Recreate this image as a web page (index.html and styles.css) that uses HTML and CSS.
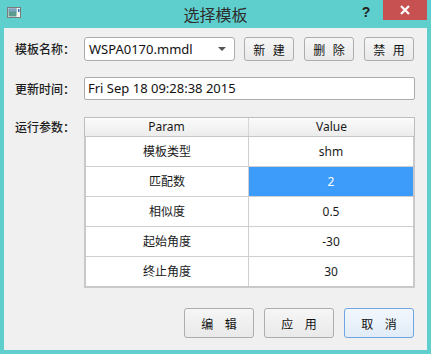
FILE: index.html
```html
<!DOCTYPE html>
<html lang="zh-CN">
<head>
    <meta charset="UTF-8">
    <title>选择模板</title>
    <link rel="stylesheet" href="styles.css">
</head>
<body>
    <div class="window">
        <div class="titlebar">
            <svg class="app-icon" width="14" height="11" viewBox="0 0 14 11">
                <rect x="0.5" y="0.5" width="13" height="10" fill="#f4f4f4" stroke="#7a7a7a"/>
                <rect x="1.5" y="1.5" width="8" height="8" fill="#5b9a8c"/>
                <rect x="1.5" y="1.5" width="8" height="3" fill="#7fa3c4"/>
                <rect x="11" y="2" width="1.5" height="3" fill="#2f6fb0"/>
            </svg>
            <div class="titlebar-title">选择模板</div>
            <div class="titlebar-help">?</div>
            <button class="titlebar-close" title="关闭">
                <svg width="10" height="10" viewBox="0 0 10 10">
                    <path d="M1 1 L9 9 M9 1 L1 9" stroke="#ffffff" stroke-width="2.2"/>
                </svg>
            </button>
        </div>

        <div class="content">
            <div class="form-row row-template">
                <div class="form-label">模板名称：</div>
                <div class="combo">
                    <span class="combo-text">WSPA0170.mmdl</span>
                    <span class="combo-arrow"></span>
                </div>
                <button class="btn small">新 建</button>
                <button class="btn small">删 除</button>
                <button class="btn small">禁 用</button>
            </div>

            <div class="form-row row-time">
                <div class="form-label">更新时间：</div>
                <div class="text-input">Fri Sep 18 09:28:38 2015</div>
            </div>

            <div class="form-row row-params">
                <div class="form-label">运行参数：</div>
                <div class="param-table">
                    <div class="param-head">
                        <div class="cell">Param</div>
                        <div class="cell">Value</div>
                    </div>
                    <div class="param-body">
                        <div class="param-row">
                            <div class="cell">模板类型</div>
                            <div class="cell">shm</div>
                        </div>
                        <div class="param-row">
                            <div class="cell">匹配数</div>
                            <div class="cell selected">2</div>
                        </div>
                        <div class="param-row">
                            <div class="cell">相似度</div>
                            <div class="cell">0.5</div>
                        </div>
                        <div class="param-row">
                            <div class="cell">起始角度</div>
                            <div class="cell">-30</div>
                        </div>
                        <div class="param-row">
                            <div class="cell">终止角度</div>
                            <div class="cell">30</div>
                        </div>
                    </div>
                </div>
            </div>

            <div class="dialog-buttons">
                <button class="btn large">编 辑</button>
                <button class="btn large">应 用</button>
                <button class="btn large default">取 消</button>
            </div>
        </div>
    </div>
</body>
</html>
```

FILE: styles.css
```css
body {
    margin: 0;
    padding: 0;
    font-family: 'Noto Sans', 'Noto Sans CJK SC', sans-serif;
    background-color: #5fcfcd;
    color: #1a1a1a;
    overflow: hidden;
}

.window {
    width: 431px;
    height: 354px;
    box-sizing: border-box;
    border: 4px solid #5fcfcd;
    border-top: none;
    display: flex;
    flex-direction: column;
}

.titlebar {
    height: 28px;
    display: flex;
    align-items: flex-start;
    position: relative;
}

.app-icon {
    margin: 7px 0 0 3px;
}

.titlebar-title {
    position: absolute;
    left: 0;
    right: 0;
    top: 3px;
    text-align: center;
    font-family: 'Noto Sans CJK SC', sans-serif;
    font-size: 16px;
    line-height: 22px;
    color: #2e2e2e;
    pointer-events: none;
}

.titlebar-help {
    margin-left: auto;
    margin-top: 3px;
    width: 20px;
    text-align: center;
    font-family: 'Liberation Sans', sans-serif;
    font-weight: bold;
    font-size: 14px;
    line-height: 18px;
    color: #222222;
}

.titlebar-close {
    margin-left: 7px;
    width: 44px;
    height: 20px;
    border: none;
    padding: 0;
    background: #c75050;
    display: flex;
    align-items: center;
    justify-content: center;
}

.content {
    flex: 1;
    background: #f0f0f0;
    padding: 9px 12px 0 11px;
    font-size: 12px;
}

.form-row {
    display: flex;
    align-items: flex-start;
}

.form-label {
    width: 69px;
    flex: none;
    font-family: 'Noto Sans CJK SC', sans-serif;
    font-size: 12px;
    font-weight: 500;
    color: #1e1e1e;
}

.row-template {
    height: 24px;
}

.row-template .form-label {
    line-height: 24px;
}

.combo {
    width: 151px;
    height: 24px;
    box-sizing: border-box;
    border: 1px solid #acacac;
    border-radius: 3px;
    background: #ffffff;
    display: flex;
    align-items: center;
    padding: 0 8px 0 4px;
    margin-right: 9px;
}

.combo-text {
    flex: 1;
    font-size: 13px;
    color: #111111;
}

.combo-arrow {
    width: 0;
    height: 0;
    border-left: 4px solid transparent;
    border-right: 4px solid transparent;
    border-top: 4px solid #555555;
}

.btn {
    font-family: 'Noto Sans CJK SC', sans-serif;
    font-size: 12px;
    color: #111111;
    border: 1px solid #adadad;
    border-radius: 3px;
    background: linear-gradient(#f6f6f6, #e9e9e9);
    padding: 0;
    box-sizing: border-box;
}

.btn.small {
    width: 50px;
    height: 24px;
    margin-right: 10px;
    word-spacing: 5px;
}

.btn.small:last-child {
    margin-right: 0;
}

.btn.large {
    width: 70px;
    height: 30px;
    word-spacing: 9px;
}

.btn.default {
    border-color: #6ea5e2;
    background: linear-gradient(#f2f7fc, #e1ecf8);
}

.row-time {
    margin-top: 16px;
}

.row-time .form-label {
    line-height: 23px;
}

.text-input {
    flex: 1;
    height: 21px;
    line-height: 21px;
    border: 1px solid #acacac;
    border-radius: 2px;
    background: #ffffff;
    padding-left: 3px;
    font-size: 13px;
    color: #111111;
}

.row-params {
    margin-top: 17px;
}

.row-params .form-label {
    line-height: 20px;
}

.param-table {
    flex: 1;
    border: 1px solid #bdbdbd;
    border-bottom: none;
    background: #ffffff;
    text-align: center;
    font-family: 'Noto Sans', 'Noto Sans CJK SC', sans-serif;
    font-size: 12px;
}

.param-head {
    display: grid;
    grid-template-columns: 164px 1fr;
    height: 18px;
    line-height: 18px;
    background: linear-gradient(#fbfbfb, #ececec);
    border-bottom: 1px solid #c6c6c6;
}

.param-head .cell:first-child {
    border-right: 1px solid #d6d6d6;
}

.param-body {
    border: 2px solid #c9c9c9;
    border-top: none;
    margin: 0 -1px;
}

.param-row {
    display: grid;
    grid-template-columns: 163px 1fr;
    height: 29px;
    line-height: 29px;
    border-bottom: 1px solid #cfcfcf;
}

.param-row:last-child {
    border-bottom: none;
}

.param-row .cell:first-child {
    border-right: 1px solid #cfcfcf;
}

.cell.selected {
    background: #3d9bfa;
    color: #ffffff;
}

.dialog-buttons {
    display: flex;
    justify-content: flex-end;
    gap: 10px;
    margin-top: 20px;
    padding-right: 1px;
}
```
